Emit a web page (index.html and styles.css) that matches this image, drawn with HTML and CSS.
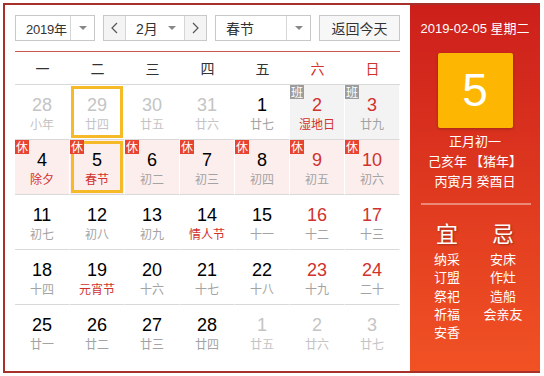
FILE: index.html
```html
<!DOCTYPE html>
<html lang="zh-CN">
<head>
  <meta charset="UTF-8">
  <title>万年历</title>
  <link rel="stylesheet" href="styles.css">
</head>
<body>
  <div class="calendar">
    <div class="main">
      <div class="toolbar">
        <div class="select year-select">
          <span class="select-text">2019年</span>
          <span class="select-arrow"><i class="caret"></i></span>
        </div>
        <div class="select month-select">
          <span class="nav-btn"><svg width="7" height="12" viewBox="0 0 7 12"><polyline points="6,1 1,6 6,11" fill="none" stroke="#555" stroke-width="1.2"/></svg></span>
          <span class="select-text">2月</span>
          <span class="month-arrow"><i class="caret"></i></span>
          <span class="nav-btn next"><svg width="7" height="12" viewBox="0 0 7 12"><polyline points="1,1 6,6 1,11" fill="none" stroke="#555" stroke-width="1.2"/></svg></span>
        </div>
        <div class="select holiday-select">
          <span class="select-text">春节</span>
          <span class="select-arrow"><i class="caret"></i></span>
        </div>
        <div class="today-btn">返回今天</div>
      </div>

      <div class="weekdays">
        <span>一</span><span>二</span><span>三</span><span>四</span><span>五</span>
        <span class="weekend">六</span><span class="weekend">日</span>
      </div>

      <div class="days">
        <div class="day other"><b>28</b><small>小年</small></div>
        <div class="day other selected"><b>29</b><small>廿四</small></div>
        <div class="day other"><b>30</b><small>廿五</small></div>
        <div class="day other"><b>31</b><small>廿六</small></div>
        <div class="day"><b>1</b><small>廿七</small></div>
        <div class="day work red"><em class="tag">班</em><b>2</b><small class="fest">湿地日</small></div>
        <div class="day work red"><em class="tag">班</em><b>3</b><small>廿九</small></div>

        <div class="day rest"><em class="tag">休</em><b>4</b><small class="fest">除夕</small></div>
        <div class="day rest selected"><em class="tag">休</em><b>5</b><small class="fest">春节</small></div>
        <div class="day rest"><em class="tag">休</em><b>6</b><small>初二</small></div>
        <div class="day rest"><em class="tag">休</em><b>7</b><small>初三</small></div>
        <div class="day rest"><em class="tag">休</em><b>8</b><small>初四</small></div>
        <div class="day rest red"><em class="tag">休</em><b>9</b><small>初五</small></div>
        <div class="day rest red"><em class="tag">休</em><b>10</b><small>初六</small></div>

        <div class="day"><b>11</b><small>初七</small></div>
        <div class="day"><b>12</b><small>初八</small></div>
        <div class="day"><b>13</b><small>初九</small></div>
        <div class="day"><b>14</b><small class="fest">情人节</small></div>
        <div class="day"><b>15</b><small>十一</small></div>
        <div class="day red"><b>16</b><small>十二</small></div>
        <div class="day red"><b>17</b><small>十三</small></div>

        <div class="day"><b>18</b><small>十四</small></div>
        <div class="day"><b>19</b><small class="fest">元宵节</small></div>
        <div class="day"><b>20</b><small>十六</small></div>
        <div class="day"><b>21</b><small>十七</small></div>
        <div class="day"><b>22</b><small>十八</small></div>
        <div class="day red"><b>23</b><small>十九</small></div>
        <div class="day red"><b>24</b><small>二十</small></div>

        <div class="day last"><b>25</b><small>廿一</small></div>
        <div class="day last"><b>26</b><small>廿二</small></div>
        <div class="day last"><b>27</b><small>廿三</small></div>
        <div class="day last"><b>28</b><small>廿四</small></div>
        <div class="day last other"><b>1</b><small>廿五</small></div>
        <div class="day last other"><b>2</b><small>廿六</small></div>
        <div class="day last other"><b>3</b><small>廿七</small></div>
      </div>
    </div>

    <div class="panel">
      <div class="panel-date">2019-02-05 星期二</div>
      <div class="big-day">5</div>
      <div class="lunar">
        <p>正月初一</p>
        <p>己亥年 【猪年】</p>
        <p>丙寅月 癸酉日</p>
      </div>
      <div class="panel-line"></div>
      <div class="yiji">
        <div class="yiji-col">
          <h2>宜</h2>
          <p>纳采</p><p>订盟</p><p>祭祀</p><p>祈福</p><p>安香</p>
        </div>
        <div class="yiji-col">
          <h2>忌</h2>
          <p>安床</p><p>作灶</p><p>造船</p><p>会亲友</p>
        </div>
      </div>
    </div>
  </div>
</body>
</html>
```

FILE: styles.css
```css
:root {
  --border: #a8302a;
  --line: #d9d9d9;
  --red: #d0322d;
  --gray: #a3a3a3;
  --light: #c4c4c4;
  --yellow: #f6b928;
}

* {
  margin: 0;
  padding: 0;
  box-sizing: border-box;
}

body {
  font-family: "Liberation Sans", "Noto Sans CJK SC", Arial, sans-serif;
  background-color: white;
  color: #333;
  padding: 3px;
}

.calendar {
  width: 537px;
  height: 370px;
  display: flex;
  border: 2px solid var(--border);
  border-right: none;
  background-color: white;
}

.main {
  width: 405px;
  padding: 10px 10px 0;
}

/* toolbar */

.toolbar {
  display: flex;
  gap: 8px;
  height: 26px;
  padding-bottom: 10px;
  box-sizing: content-box;
  border-bottom: 1px solid #c9574c;
}

.select {
  display: flex;
  align-items: center;
  border: 1px solid #c8c8c8;
  background-color: white;
  font-size: 14px;
  color: #333;
}

.select-text {
  flex: 1;
  padding-left: 10px;
  white-space: nowrap;
}

.select-arrow {
  width: 24px;
  height: 100%;
  display: flex;
  align-items: center;
  justify-content: center;
  border-left: 1px solid #d6d6d6;
}

.caret {
  width: 0;
  height: 0;
  border-left: 4px solid transparent;
  border-right: 4px solid transparent;
  border-top: 4px solid #888;
}

.year-select {
  width: 80px;
}

.year-select .select-text {
  font-size: 13px;
  letter-spacing: -0.2px;
}

.month-select {
  width: 104px;
}

.month-arrow {
  width: 24px;
  display: flex;
  justify-content: center;
}

.nav-btn {
  width: 22px;
  height: 100%;
  display: flex;
  align-items: center;
  justify-content: center;
  background-color: #f4f4f4;
  border-right: 1px solid #d6d6d6;
}

.nav-btn.next {
  border-right: none;
  border-left: 1px solid #d6d6d6;
}

.holiday-select {
  width: 96px;
}

.today-btn {
  flex: 1;
  display: flex;
  align-items: center;
  justify-content: center;
  border: 1px solid #c8c8c8;
  background-color: #f7f7f7;
  font-size: 14px;
  color: #333;
  font-family: "Noto Sans CJK SC", sans-serif;
}

/* grid */

.weekdays {
  display: grid;
  grid-template-columns: repeat(7, 55px);
  height: 33px;
  align-items: center;
  border-bottom: 1px solid var(--line);
  font-family: "Noto Sans CJK SC", sans-serif;
  font-size: 14px;
  color: #333;
  text-align: center;
}

.weekdays .weekend {
  color: var(--red);
}

.days {
  display: grid;
  grid-template-columns: repeat(7, 55px);
  grid-auto-rows: 55px;
}

.day {
  position: relative;
  display: flex;
  flex-direction: column;
  align-items: center;
  padding-top: 10px;
  border-right: 1px solid white;
  border-bottom: 1px solid var(--line);
}

.day.last {
  border-bottom: none;
}

.day b {
  font-weight: normal;
  font-size: 18px;
  line-height: 20px;
  color: #000;
}

.day small {
  margin-top: 2px;
  font-family: "Noto Sans CJK SC", sans-serif;
  font-size: 12px;
  line-height: 14px;
  color: var(--gray);
}

.day small.fest {
  color: var(--red);
}

.day.red b {
  color: var(--red);
}

.day.other b,
.day.other small {
  color: var(--light);
}

.day.rest {
  background-color: #fdeeee;
}

.day.work {
  background-color: #f3f3f3;
}

.tag {
  position: absolute;
  top: 0;
  left: 0;
  z-index: 1;
  width: 14px;
  height: 14px;
  font-style: normal;
  font-family: "Noto Sans CJK SC", sans-serif;
  font-size: 12px;
  line-height: 14px;
  text-align: center;
  color: white;
  background-color: #e8432f;
}

.work .tag {
  background-color: #9c9c9c;
}

.day.selected::after {
  content: "";
  position: absolute;
  top: 1px;
  left: 1px;
  right: 1px;
  bottom: 1px;
  border: 3px solid var(--yellow);
}

/* right panel */

.panel {
  width: 130px;
  height: 100%;
  background: linear-gradient(#cc1f1b, #f15224);
  color: white;
  text-align: center;
  padding-top: 14px;
}

.panel-date {
  font-size: 13px;
  line-height: 20px;
}

.big-day {
  width: 75px;
  height: 75px;
  margin: 14px auto 0;
  background-color: #fdb702;
  border-radius: 2px;
  box-shadow: 0 1px 3px rgba(0, 0, 0, 0.25);
  font-size: 46px;
  line-height: 75px;
}

.lunar {
  margin-top: 3px;
  font-family: "Noto Sans CJK SC", sans-serif;
  font-size: 13px;
  line-height: 20px;
}

.panel-line {
  height: 2px;
  margin: 12px 9px 0 11px;
  background-color: rgba(255, 255, 255, 0.4);
}

.yiji {
  display: flex;
  justify-content: center;
  margin-top: 12px;
  font-family: "Noto Sans CJK SC", sans-serif;
}

.yiji-col {
  width: 56px;
}

.yiji-col h2 {
  font-size: 22px;
  font-weight: normal;
  line-height: 30px;
  margin-bottom: 3px;
  text-shadow: 1px 1px 2px rgba(0, 0, 0, 0.3);
}

.yiji-col p {
  font-size: 13px;
  line-height: 18.3px;
}
```
